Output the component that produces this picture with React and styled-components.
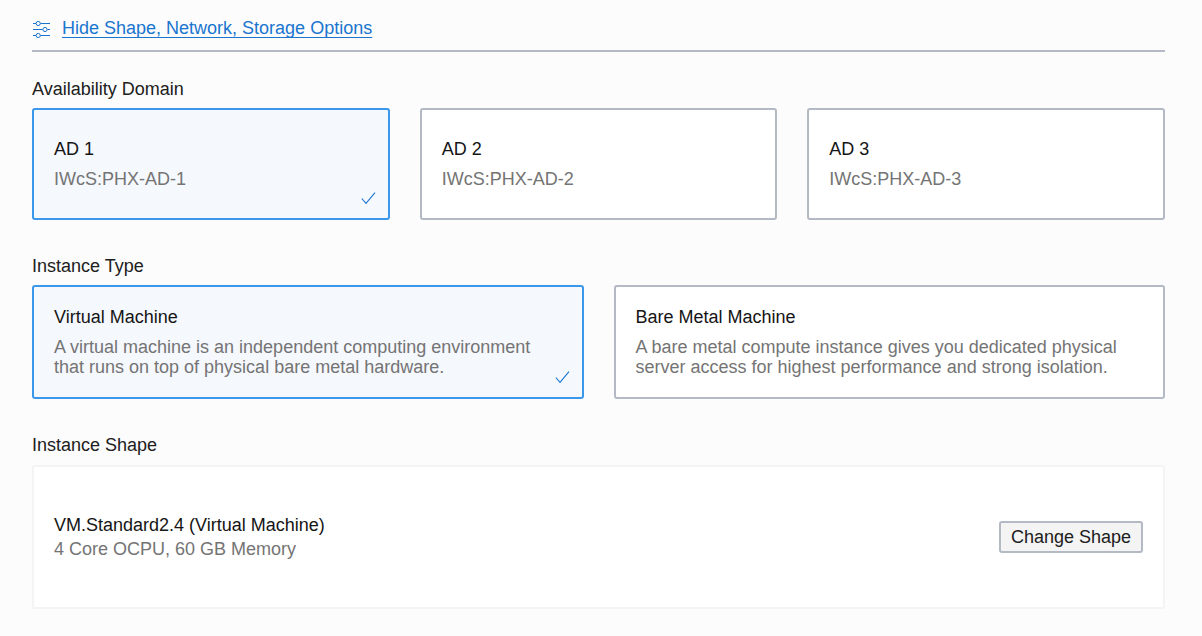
import React, { useState } from "react";
import styled, { createGlobalStyle } from "styled-components";

const GlobalStyle = createGlobalStyle`
  *, *::before, *::after { box-sizing: border-box; }
  body {
    margin: 0;
    background: #fcfcfc;
    color: #202020;
    font: 18px/20px "Liberation Sans", Arial, sans-serif;
  }
`;

const Page = styled.main`
  padding: 16px 37px 27px 32px;
`;

const Toolbar = styled.header`
  display: flex;
  align-items: center;
  gap: 11px;
  height: 36px;
  padding-bottom: 10px;
  border-bottom: 2px solid #b3b9c5;
`;

const ToggleLink = styled.a`
  color: #1a75cf;
  line-height: 24px;
  text-decoration: underline 1px;
  text-underline-offset: 3px;
  text-decoration-skip-ink: none;
`;

const SlidersSvg = styled.svg`
  flex: none;
  margin-top: 2px;
`;

const Group = styled.section`
  margin-top: ${(p) => p.$space}px;
`;

const GroupTitle = styled.h2`
  margin: 0 0 ${(p) => p.$gap || 9}px;
  font-size: 18px;
  line-height: 20px;
  font-weight: 400;
`;

const CardGrid = styled.div`
  display: grid;
  grid-template-columns: repeat(${(p) => p.$columns}, minmax(0, 1fr));
  gap: 30px;
`;

const Card = styled.label`
  position: relative;
  display: flex;
  flex-direction: column;
  justify-content: center;
  gap: 10px;
  min-height: 112px;
  padding: 20px;
  border: 2px solid ${(p) => (p.$selected ? "#3b97ea" : "#b3b9c5")};
  border-radius: 3px;
  background: ${(p) => (p.$selected ? "#f5f8fd" : "#ffffff")};
  cursor: pointer;

  &:focus-within {
    box-shadow: 0 0 0 2px #b9dafa;
  }
`;

const CardRadio = styled.input`
  position: absolute;
  inset: 0;
  width: 100%;
  height: 100%;
  margin: 0;
  opacity: 0;
  cursor: pointer;
`;

const CardTitle = styled.span`
  color: #151515;
`;

const CardText = styled.span`
  color: #747474;
`;

const CheckSvg = styled.svg`
  position: absolute;
  right: 12px;
  bottom: 13px;
`;

const ShapePanel = styled.div`
  display: flex;
  align-items: center;
  justify-content: space-between;
  gap: 20px;
  min-height: 144px;
  padding: 20px;
  border: 2px solid #f4f4f4;
  border-radius: 3px;
  background: #ffffff;
`;

const ShapeInfo = styled.div`
  display: flex;
  flex-direction: column;
  line-height: 24px;
`;

const ChangeButton = styled.button`
  height: 32px;
  padding: 0 10px;
  border: 2px solid #b3b9c5;
  border-radius: 3px;
  background: #f4f4f4;
  color: #202020;
  font: inherit;
  cursor: pointer;
`;

function SlidersIcon() {
  return (
    <SlidersSvg width="19" height="18" viewBox="0 0 19 18" fill="none" stroke="#1a75cf" aria-hidden="true">
      <path d="M1 3.5h3M8.5 3.5H18M1 9.5h9.5M15.5 9.5H18M1 15.5h3M8.5 15.5H18" />
      <circle cx="6.2" cy="3.5" r="2.1" />
      <circle cx="13" cy="9.5" r="2.1" />
      <circle cx="6.2" cy="15.5" r="2.1" />
    </SlidersSvg>
  );
}

function CheckIcon() {
  return (
    <CheckSvg width="15" height="13" viewBox="0 0 15 13" fill="none" stroke="#1a75cf" strokeWidth="1.1" aria-hidden="true">
      <path d="M0.8 6.5L5 11.3L14 0.6" />
    </CheckSvg>
  );
}

const domains = [
  { id: "ad1", title: "AD 1", text: "IWcS:PHX-AD-1" },
  { id: "ad2", title: "AD 2", text: "IWcS:PHX-AD-2" },
  { id: "ad3", title: "AD 3", text: "IWcS:PHX-AD-3" },
];

const types = [
  {
    id: "vm",
    title: "Virtual Machine",
    text: "A virtual machine is an independent computing environment that runs on top of physical bare metal hardware.",
  },
  {
    id: "bm",
    title: "Bare Metal Machine",
    text: "A bare metal compute instance gives you dedicated physical server access for highest performance and strong isolation.",
  },
];

function CardPicker({ name, title, space, options }) {
  const [value, setValue] = useState(options[0].id);
  return (
    <Group $space={space}>
      <GroupTitle id={`${name}-title`}>{title}</GroupTitle>
      <CardGrid $columns={options.length} role="radiogroup" aria-labelledby={`${name}-title`}>
        {options.map((o) => (
          <Card key={o.id} htmlFor={o.id} $selected={value === o.id}>
            <CardRadio
              type="radio"
              id={o.id}
              name={name}
              checked={value === o.id}
              onChange={() => setValue(o.id)}
            />
            <CardTitle>{o.title}</CardTitle>
            <CardText>{o.text}</CardText>
            {value === o.id && <CheckIcon />}
          </Card>
        ))}
      </CardGrid>
    </Group>
  );
}

export default function App() {
  return (
    <>
      <GlobalStyle />
      <Page>
        <Toolbar>
          <SlidersIcon />
          <ToggleLink href="#options">Hide Shape, Network, Storage Options</ToggleLink>
        </Toolbar>
        <CardPicker name="domain" title="Availability Domain" space={27} options={domains} />
        <CardPicker name="type" title="Instance Type" space={36} options={types} />
        <Group $space={36}>
          <GroupTitle $gap={10}>Instance Shape</GroupTitle>
          <ShapePanel>
            <ShapeInfo>
              <CardTitle>VM.Standard2.4 (Virtual Machine)</CardTitle>
              <CardText>4 Core OCPU, 60 GB Memory</CardText>
            </ShapeInfo>
            <ChangeButton type="button">Change Shape</ChangeButton>
          </ShapePanel>
        </Group>
      </Page>
    </>
  );
}
